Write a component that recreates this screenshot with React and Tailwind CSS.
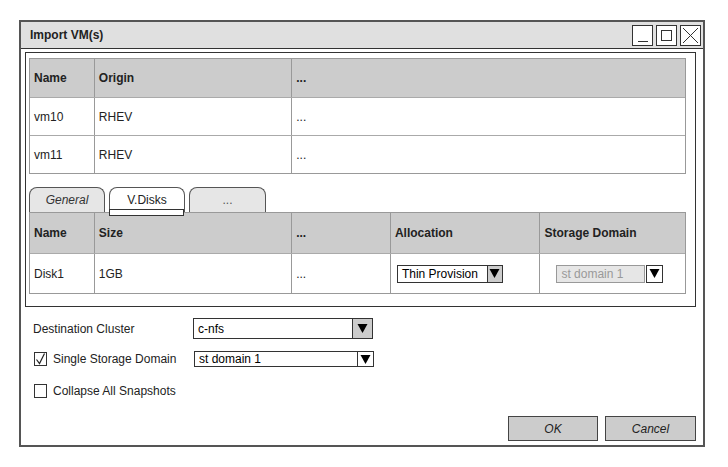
import React from "react";

const Tri = () => (
  <svg width="11" height="11" viewBox="0 0 11 11"><polygon points="0.5,1 10.5,1 5.5,10" fill="#000" /></svg>
);

function Dropdown({ w, h, text, arrowBg = "bg-[#cccccc]", textCls = "text-black", boxBg = "bg-white", border = "border-[#333]", aw = 15 }) {
  return (
    <div className={`flex ${boxBg} border ${border}`} style={{ width: w, height: h }}>
      <div className={`flex-1 flex items-center pl-[4px] text-[12px] leading-none ${textCls}`}>{text}</div>
      <div className={`flex items-center justify-center border-l border-[#333] ${arrowBg}`} style={{ width: aw }}>
        <Tri />
      </div>
    </div>
  );
}

function Check({ checked }) {
  return (
    <div className="w-[13px] h-[14px] border border-[#333] bg-white flex items-center justify-center">
      {checked && (
        <svg width="11" height="12" viewBox="0 0 11 12"><path d="M1.5 6.5 L4.5 10.5 L9.5 0.5" stroke="#222" strokeWidth="1.2" fill="none" /></svg>
      )}
    </div>
  );
}

function Row({ cols, cells, h, header }) {
  return (
    <div className={`flex ${header ? "bg-[#cccccc]" : "bg-white"} border-b border-[#aaa] last:border-b-0`} style={{ height: h }}>
      {cells.map((c, i) => (
        <div
          key={i}
          className={`flex items-center pl-[4px] text-[12px] ${header ? "font-bold text-[#222]" : "text-[#222]"} ${i < cols.length - 1 ? "border-r border-[#999]" : ""}`}
          style={{ width: cols[i] }}
        >
          {c}
        </div>
      ))}
    </div>
  );
}

export default function App() {
  const c1 = [65, 198, 394];
  const c2 = [65, 198, 99, 150, 145];
  return (
    <div className="w-[728px] h-[467px] bg-white pl-[19px] pt-[20px] font-['Liberation_Sans',Arial,sans-serif] text-[#222]">
      <div className="w-[686px] h-[427px] border-2 border-[#555] flex flex-col">
        {/* title bar */}
        <div className="h-[27px] bg-[#e0e0e0] border-b border-[#333] flex items-center justify-between pl-[9px] pr-[2px]">
          <div className="text-[12px] font-bold">Import VM(s)</div>
          <div className="flex gap-[3px]">
            <div className="w-[21px] h-[21px] border border-[#333] bg-white flex items-end justify-center pb-[3px]">
              <div className="w-[10px] h-[1px] bg-[#333]" />
            </div>
            <div className="w-[21px] h-[21px] border border-[#333] bg-white flex items-center justify-center">
              <div className="w-[11px] h-[11px] border border-[#333]" />
            </div>
            <div className="w-[21px] h-[21px] border border-[#333] bg-white flex items-center justify-center">
              <svg width="17" height="17" viewBox="0 0 17 17"><path d="M1 1 L16 16 M16 1 L1 16" stroke="#333" strokeWidth="1" /></svg>
            </div>
          </div>
        </div>

        {/* inner panel */}
        <div className="ml-[4px] mt-[3px] w-[671px] h-[255px] border border-[#333] pl-[3px] pt-[5px] flex flex-col">
          <div className="w-[657px] border border-[#999]">
            <Row header cols={c1} h={39} cells={["Name", "Origin", "..."]} />
            <Row cols={c1} h={38} cells={["vm10", "RHEV", "..."]} />
            <Row cols={c1} h={37} cells={["vm11", "RHEV", "..."]} />
          </div>
          {/* tabs */}
          <div className="flex gap-[4px] mt-[13px] h-[25px] items-end">
            <div className="w-[76px] h-[25px] rounded-t-[8px] border border-b-0 border-[#555] bg-[#e6e6e6] flex items-center justify-center text-[12px] italic text-[#333]">General</div>
            <div className="relative w-[76px] h-[25px] rounded-t-[8px] border border-b-0 border-[#555] bg-white flex items-center justify-center text-[12px] text-[#222]">
              V.Disks
              <div className="absolute left-[-1px] right-[0px] bottom-[-4px] h-[7px] border border-[#333] bg-white z-10" />
            </div>
            <div className="w-[77px] h-[25px] rounded-t-[8px] border border-b-0 border-[#555] bg-[#e6e6e6] flex items-center justify-center text-[12px] text-[#555]">...</div>
          </div>
          <div className="w-[657px] border border-[#999]">
            <Row header cols={c2} h={41} cells={["Name", "Size", "...", "Allocation", "Storage Domain"]} />
            <div className="flex bg-white h-[39px]">
              <div className="w-[65px] border-r border-[#999] flex items-center pl-[4px] text-[12px]">Disk1</div>
              <div className="w-[198px] border-r border-[#999] flex items-center pl-[4px] text-[12px]">1GB</div>
              <div className="w-[99px] border-r border-[#999] flex items-center pl-[4px] text-[12px]">...</div>
              <div className="w-[150px] border-r border-[#999] flex items-center pl-[6px]">
                <Dropdown w={106} h={18} text="Thin Provision" />
              </div>
              <div className="w-[145px] flex items-center pl-[16px]">
                <div className="flex items-center">
                  <div className="w-[89px] h-[18px] bg-[#e6e6e6] border border-[#999] flex items-center pl-[4px] text-[12px] text-[#999]">st domain 1</div>
                  <div className="ml-[1px] w-[17px] h-[18px] border border-[#333] bg-white flex items-center justify-center"><Tri /></div>
                </div>
              </div>
            </div>
          </div>
        </div>

        {/* form */}
        <div className="flex items-center pl-[12px] mt-[11px] h-[21px]">
          <div className="w-[160px] text-[12px]">Destination Cluster</div>
          <Dropdown w={180} h={21} text="c-nfs" aw={20} />
        </div>
        <div className="flex items-center pl-[13px] mt-[12px] h-[16px]">
          <Check checked />
          <div className="ml-[6px] w-[141px] text-[12px]">Single Storage Domain</div>
          <Dropdown w={180} h={16} text="st domain 1" arrowBg="bg-white" aw={16} />
        </div>
        <div className="flex items-center pl-[13px] mt-[16px] h-[15px]">
          <Check />
          <div className="ml-[6px] text-[12px]">Collapse All Snapshots</div>
        </div>

        <div className="mt-auto mb-[4px] pr-[7px] flex justify-end gap-[7px]">
          <div className="w-[90px] h-[25px] bg-[#cccccc] border border-[#444] flex items-center justify-center text-[12px] italic">OK</div>
          <div className="w-[91px] h-[25px] bg-[#cccccc] border border-[#444] flex items-center justify-center text-[12px] italic">Cancel</div>
        </div>
      </div>
    </div>
  );
}
